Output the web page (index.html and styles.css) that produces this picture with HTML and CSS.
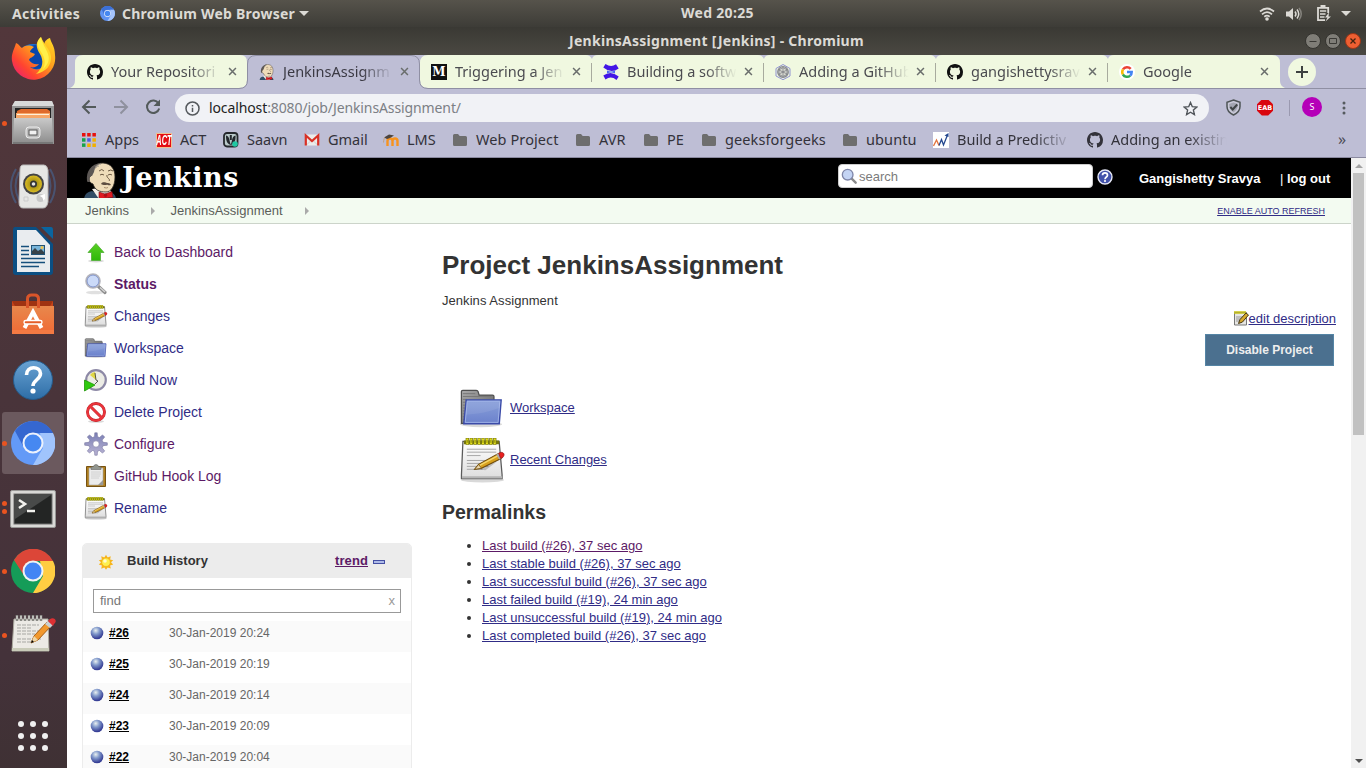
FILE: index.html
```html
<!DOCTYPE html>
<html lang="en">
<head>
<meta charset="utf-8">
<title>JenkinsAssignment [Jenkins]</title>
<link rel="stylesheet" href="styles.css">
</head>
<body>
<svg class="defs" width="0" height="0" aria-hidden="true">
  <defs>
    <linearGradient id="silver" x1="0" y1="0" x2="0" y2="1"><stop offset="0" stop-color="#c9c9c9"/><stop offset="1" stop-color="#8e8e8e"/></linearGradient>
    <linearGradient id="paper" x1="0" y1="0" x2="0" y2="1"><stop offset="0" stop-color="#fff"/><stop offset="1" stop-color="#ddd"/></linearGradient>
    <linearGradient id="blueFolder" x1="0" y1="0" x2="0" y2="1"><stop offset="0" stop-color="#8aa1da"/><stop offset="1" stop-color="#6b81cc"/></linearGradient>
    <linearGradient id="grayFolder" x1="0" y1="0" x2="1" y2="1"><stop offset="0" stop-color="#aaa"/><stop offset="1" stop-color="#5c5c5c"/></linearGradient>
    <linearGradient id="ffBody" x1="1" y1="0" x2="0" y2="1"><stop offset="0" stop-color="#ffe226"/><stop offset=".4" stop-color="#ff9a1e"/><stop offset=".7" stop-color="#ff4430"/><stop offset="1" stop-color="#e31587"/></linearGradient>
    <linearGradient id="bag" x1="0" y1="0" x2="0" y2="1"><stop offset="0" stop-color="#e8884c"/><stop offset="1" stop-color="#f06a35"/></linearGradient>
    <linearGradient id="helpBlue" x1="0" y1="0" x2="0" y2="1"><stop offset="0" stop-color="#6aa3d4"/><stop offset="1" stop-color="#2d6da6"/></linearGradient>
    <linearGradient id="green" x1="0" y1="0" x2="0" y2="1"><stop offset="0" stop-color="#59cf24"/><stop offset="1" stop-color="#2db808"/></linearGradient>
    <linearGradient id="gearFill" x1="0" y1="0" x2="0" y2="1"><stop offset="0" stop-color="#7a7fb5"/><stop offset="1" stop-color="#b9b3d3"/></linearGradient>
    <radialGradient id="ball" cx=".4" cy=".3" r=".65"><stop offset="0" stop-color="#e9f0f0"/><stop offset=".45" stop-color="#8199cb"/><stop offset="1" stop-color="#373f96"/></radialGradient>
    <radialGradient id="cone" cx=".5" cy=".5" r=".5"><stop offset="0" stop-color="#8c7a10"/><stop offset="1" stop-color="#d9bb22"/></radialGradient>
  </defs>

  <symbol id="github" viewBox="0 0 16 16"><path fill="currentColor" fill-rule="evenodd" d="M8 0C3.58 0 0 3.58 0 8c0 3.54 2.29 6.53 5.47 7.59.4.07.55-.17.55-.38 0-.19-.01-.82-.01-1.49-2.01.37-2.53-.49-2.69-.94-.09-.23-.48-.94-.82-1.13-.28-.15-.68-.52-.01-.53.63-.01 1.08.58 1.23.82.72 1.21 1.87.87 2.33.66.07-.52.28-.87.51-1.07-1.78-.2-3.64-.89-3.64-3.95 0-.87.31-1.59.82-2.15-.08-.2-.36-1.02.08-2.12 0 0 .67-.21 2.2.82.64-.18 1.32-.27 2-.27s1.36.09 2 .27c1.53-1.04 2.2-.82 2.2-.82.44 1.1.16 1.92.08 2.12.51.56.82 1.27.82 2.15 0 3.07-1.87 3.75-3.65 3.95.29.25.54.73.54 1.48 0 1.07-.01 1.93-.01 2.2 0 .21.15.46.55.38A8.01 8.01 0 0 0 16 8c0-4.42-3.58-8-8-8z"/></symbol>

  <symbol id="butler" viewBox="0 0 34 37">
    <path d="M0 37c1-5 3-7 8-8l9 5 8-4c5 1 7 4 7 7z" fill="#334e66"/>
    <path d="M8 27l7 10h8l4-8-5-4z" fill="#f4efe8"/>
    <path d="M7 14C7 5 12 1 19 1c8 .5 12 6 12 14 0 9-4 15-9 15-7 0-11-2-13-8-3-1-4-3-4-5 0-2 1-3 2-3z" fill="#efdcb9" stroke="#2a241f" stroke-width=".8"/>
    <path d="M3 19C2 9 7 2 17 1c-4 2-6 4-7 9l-2 4c-2 0-3 2-2 6-2 0-3 0-3-1z" fill="#5c5754"/>
    <path d="M11 5c2-2 4-3 6-3M10 8c1-2 3-4 5-4" fill="none" stroke="#8b8681" stroke-width=".8"/>
    <path d="M15 9q3-3 5 0M24 9q3-2 5 0M16 13q2-1.500 4 0M24 13q2-1.500 4 0M23 13c-1 3 4 4 2 6" fill="none" stroke="#5c4936" stroke-width=".9"/>
    <path d="M17 22c2-3 5-1 6-1s3 0 4 2c-3 .6-3-.3-4-.3s-3 1-6-.7z" fill="#5c4c40"/>
    <path d="M20 25.500q2.500 1 4 0" fill="none" stroke="#8b6a4e" stroke-width=".7"/>
    <path d="M15 30l6 2 7-2.500 1 6-7 .5-7 1z" fill="#e01b22" stroke="#701015" stroke-width=".6"/><circle cx="21.500" cy="33.300" r="1.700" fill="#a91118"/>
  </symbol>

  <symbol id="close" viewBox="0 0 10 10"><path d="M1.200 1.200l7.600 7.600M8.800 1.200L1.200 8.800" stroke="currentColor" stroke-width="1.700"/></symbol>

  <symbol id="bmfolder" viewBox="0 0 14 12"><path d="M0 1.500Q0 0 1.500 0H5l1.700 2H12.500Q14 2 14 3.500V10.500Q14 12 12.500 12h-11Q0 12 0 10.500z" fill="#6e6e6e"/></symbol>

  <symbol id="notepad" viewBox="0 0 48 48">
    <ellipse cx="24" cy="45" rx="22" ry="2.500" fill="#000" opacity=".15"/>
    <path d="M4 5.500h37l3 34v4H2.500v-4z" fill="url(#paper)" stroke="#5a5a5a" stroke-width="1.300"/>
    <path d="M3 41h41v2.500H3z" fill="#b5b5b5"/>
    <path d="M5 4.500h36v4H5z" fill="#75750c"/>
    <path d="M8.500 2v7M12.500 2v7M16.500 2v7M20.500 2v7M24.500 2v7M28.500 2v7M32.500 2v7M36.500 2v7" stroke="#78780e" stroke-width="3.400"/>
    <path d="M8.500 2.500v6M12.500 2.500v6M16.500 2.500v6M20.500 2.500v6M24.500 2.500v6M28.500 2.500v6M32.500 2.500v6M36.500 2.500v6" stroke="#e7e31c" stroke-width="2"/>
    <path d="M8.500 4v3M12.500 4v3M16.500 4v3M20.500 4v3M24.500 4v3M28.500 4v3M32.500 4v3M36.500 4v3" stroke="#78780e" stroke-width=".8"/>
    <path d="M8 13.500h30M8 16.500h30M8 20h14M8 25h30M8 28h26M8 31h22M8 34h16" stroke="#a5a5a5" stroke-width="1"/>
    <path d="M19 34l20-8-12 9z" opacity=".18"/>
    <path d="M16 34l4-5 20-11 3 5-20 10z" fill="#d8a11d" stroke="#6e4a09" stroke-width="1.100"/>
    <path d="M21 30l19-10" stroke="#f5d76b" stroke-width="1.400"/>
    <path d="M16 34l4-5 3 4z" fill="#e9d6ac" stroke="#6e4a09" stroke-width=".7"/>
    <path d="M38 19l4-2 3 5-4 2z" fill="#aaa"/><path d="M40.500 17.500c3-2 6 0 5.500 2s-1.500 3-3.500 3.500z" fill="#e8201f" stroke="#8b1414" stroke-width=".7"/>
  </symbol>

  <symbol id="folder" viewBox="0 0 48 48">
    <ellipse cx="23" cy="41" rx="22" ry="3" fill="#000" opacity=".15"/>
    <path d="M2.500 40V7q0-1.500 1.500-1.500h14q1.500 0 2 1.500l1 3.500h14q1.500 0 1.500 1.500v28z" fill="url(#grayFolder)" stroke="#505050" stroke-width="1.300"/>
    <path d="M4 9h13M4 12h30M4 15h4M4 18h3M4 21h3M4 24h3M4 27h3M4 30h2M4 33h2M4 36h2" stroke="#777" stroke-width="1"/>
    <path d="M7.500 15.500h36.500l-2 25H5z" fill="url(#blueFolder)" stroke="#3b4ba8" stroke-width="1.500"/>
    <path d="M8.600 17h34l-1.800 22H6.500z" fill="none" stroke="#a9bbec" stroke-width=".8"/>
    <path d="M7 31c15-1 24-3 35-7l1-6H9z" fill="#fff" opacity=".08"/>
  </symbol>
  <symbol id="gauge" viewBox="0 0 14 14"><circle cx="7" cy="7" r="6.300" fill="url(#ball)"/></symbol>
</svg>

<div class="desktop">
  <header class="panel">
    <span class="panel-activities">Activities</span>
    <svg class="panel-logo" viewBox="0 0 44 44"><circle cx="22" cy="22" r="22" fill="#5f93f3"/><path d="M4 9A22 22 0 0 1 41 11H22L12 24z" fill="#3c70d6"/><path d="M41 11A22 22 0 0 1 22 44L32 27 30 11z" fill="#a5c4fb"/><circle cx="22" cy="22" r="10" fill="#e8effc"/><circle cx="22" cy="22" r="8" fill="#4688f1"/></svg>
    <span class="panel-app">Chromium Web Browser</span>
    <i class="caret panel-caret"></i>
    <span class="panel-clock">Wed 20:25</span>
    <span class="panel-tray">
      <svg width="16" height="14" viewBox="0 0 16 14" fill="none" stroke="#dcdad5" stroke-width="1.700"><path d="M1 4.500Q8-1.500 15 4.500M3 7.300q5-4.500 10 0M5.300 9.700q2.700-2 5.400 0"/><circle cx="8" cy="12" r="1.800" fill="#dcdad5" stroke="none"/></svg>
      <svg width="17" height="14" viewBox="0 0 17 14" fill="none" stroke="#dcdad5" stroke-width="1.500"><path d="M0 4.500h3L7 1v12L3 9.500H0z" fill="#dcdad5" stroke="none"/><path d="M9 4.500q2 2.500 0 5M11 2.500q3.500 4.500 0 9"/><path d="M13 1q4.500 6 0 12" opacity=".4"/></svg>
      <svg width="14" height="17" viewBox="0 0 14 17" fill="none" stroke="#dcdad5" stroke-width="1.800"><path d="M11.200 8V2.800H1V15.200H8"/><path d="M3.500 1.300h5" stroke-width="2.600"/><path d="M3 6h6.200M3 9h5.500M3 12h4.500" stroke-width="1.500"/><path d="M12 7.500L8 12.500h2.500L8.500 16.500 14 11.500h-2.500z" fill="#dcdad5" stroke="none"/></svg>
      <i class="caret"></i>
    </span>
  </header>

  <div class="workspace">
    <nav class="dock">
      <div class="dock-item"><svg width="48" height="48" viewBox="0 0 48 48"><circle cx="24" cy="26" r="17" fill="#1470d8"/><circle cx="27" cy="22" r="12" fill="#0a46ab"/><path d="M7 8c3 1 4 4 6 5 4-3 7-3 12-1-2 2-4 3-4 5l5 2c-2 4-5 3-6 6 3 4 6 5 10 4-2 3-6 4-9 3 5 4 13 3 16-3 3-6 0-10-1-14-2-5-1-10 5-12 1 5 5 8 5 17a21.500 21.500 0 1 1-43 6C2 19 5 15 7 8z" fill="url(#ffBody)"/><path d="M32 2c-6 5-5 11-1 17 4 7 3 14-4 20 10-2 16-9 15-18-1-7-7-11-10-19z" fill="#ffd62b"/><path d="M32 2c-5 5-4 9 0 15 4 6 5 11 2 17 5-4 7-9 5-15-2-6-6-10-7-17z" fill="#fff04a"/></svg></div>
      <div class="dock-item has-dot"><svg width="48" height="48" viewBox="0 1 48 48"><path d="M6 3h37l2 5v38H3V8z" fill="#959595"/><path d="M6 3h37l2 5H3z" fill="#d9d9d9"/><path d="M6 10h36v10H6z" fill="#222"/><path d="M8 13l4-2h26l3 2v8H7z" fill="#df6a2c"/><path d="M7 15h34v6H7z" fill="#f6a769"/><path d="M8 16.500h32" stroke="#fff0dc"/><path d="M5 20h38l1 25H4z" fill="url(#silver)"/><path d="M4 44h40v2H4z" fill="#777"/><rect x="17" y="29" width="14" height="11" rx="3" fill="#bcbcbc" stroke="#ececec"/><rect x="20" y="32" width="8" height="5" fill="#f1f1f1" stroke="#555"/></svg></div>
      <div class="dock-item"><svg width="50" height="48" viewBox="0 1 50 48"><path d="M8 7Q-2 24 8 41M11 10Q4 24 11 38M42 7q10 17 0 34M39 10q7 14 0 28" fill="none" stroke="#466796" stroke-width="2" opacity=".6"/><path d="M15 3h21q3 0 4 5v32q-1 6-5 6H15q-4 0-4-6L12 8q0-5 3-5z" fill="#e6e6e4" stroke="#bababa"/><circle cx="25.500" cy="22" r="10.500" fill="#444"/><circle cx="25.500" cy="22" r="8.500" fill="url(#cone)"/><circle cx="25.500" cy="22" r="3.500" fill="#343434"/><circle cx="25.500" cy="22" r="1.800" fill="#e5e5e5"/><circle cx="32.500" cy="36" r="4" fill="#c7c7c7"/><path d="M31 34a4 4 0 0 1 4 5l2-2v-5z" fill="#fff"/><path d="M16 35h4v4h-4z" fill="none" stroke="#ccc"/></svg></div>
      <div class="dock-item"><svg width="48" height="48" viewBox="0 0 48 48"><path d="M6 0h21l17 17v28q0 3-3 3H7q-3 0-3-3V3q0-3 2-3z" fill="#0b4f83"/><path d="M32 0h10q2 0 2 3v9z" fill="#0a659f"/><path d="M8 3h19l14 15v27H8z" fill="#e9ecef"/><path d="M12 19.500h8M12 23.500h8M12 27.500h8M12 31.500h24M12 35.500h24M12 39.500h18" stroke="#164f7c" stroke-width="1.700"/><rect x="22.500" y="18.500" width="13" height="9" fill="#78b5da" stroke="#235375"/><path d="M23 27v-3l3-3 3 3 3-2 3 3v2z" fill="#38434a"/><circle cx="33" cy="20.500" r="1.500" fill="#f2c34c"/></svg></div>
      <div class="dock-item"><svg width="48" height="48" viewBox="0 -1 48 48"><path d="M3 9h41v8H3z" fill="#c64318"/><path d="M3 9h41l-3 5H6z" fill="#9f3312"/><path d="M3 14h42v28H3z" fill="url(#bag)"/><path d="M3 38h42v4H3z" fill="#f47a43"/><path d="M18.500 16V7q0-4 4-4h3q4 0 4 4v9" fill="none" stroke="#d9552a" stroke-width="3"/><path d="M15.500 36L24 20l8.500 16" fill="none" stroke="#fff" stroke-width="4"/><rect x="15" y="28.500" width="18" height="3.500" rx="1.700" fill="#e45d28" stroke="#fff" stroke-width="1.400"/></svg></div>
      <div class="dock-item"><svg width="44" height="44" viewBox="0 0 44 44"><circle cx="22" cy="23" r="19.500" fill="url(#helpBlue)" stroke="#245b8c"/><path d="M15.500 18c0-10 14-9 14-1.500 0 6-7.500 6.500-7.500 12.500" fill="none" stroke="#fff" stroke-width="3.600"/><circle cx="22" cy="34" r="2.600" fill="#fff"/></svg></div>
      <div class="dock-item has-dot is-active"><svg width="44" height="44" viewBox="0 0 44 44"><circle cx="22" cy="22" r="22" fill="#639af7"/><path d="M4 10A22 22 0 0 1 42 12H22L12 25z" fill="#3567d0"/><path d="M42 12A22 22 0 0 1 22 44L32 27 29 12z" fill="#a0c4fc"/><circle cx="22" cy="22" r="10.500" fill="#edf2fc"/><circle cx="22" cy="22" r="8.500" fill="#4688f1"/></svg></div>
      <div class="dock-item has-two-dots"><svg width="48" height="44" viewBox="0 0 48 44"><rect x="1.500" y="5.500" width="45" height="37" rx="1.500" fill="#d9d9d6" stroke="#979795"/><rect x="5" y="9" width="38" height="30" fill="#232524" stroke="#6e6e6c"/><path d="M6 10h36L6 34z" fill="#484a49"/><path d="M10 15l6 4-6 4M18 26h8" fill="none" stroke="#f2f2ee" stroke-width="2.600"/></svg></div>
      <div class="dock-item has-dot"><svg width="44" height="44" viewBox="1 0 44 44"><circle cx="23" cy="22" r="22" fill="#159c58"/><path d="M4 11A22 22 0 0 1 43 12H23L13 25z" fill="#dc4638"/><path d="M43 12A22 22 0 0 1 23 44L33 27 30 12z" fill="#ffcd42"/><circle cx="23" cy="22" r="10.500" fill="#f2f3f2"/><circle cx="23" cy="22" r="8.500" fill="#4285f4"/></svg></div>
      <div class="dock-item has-dot"><svg width="48" height="44" viewBox="0 0 48 44"><path d="M5 6h34l1 32H3z" fill="#eceae5" stroke="#aaa99e"/><path d="M3 35h37v3H3z" fill="#c9cbb9"/><path d="M8 2v6M12 2v6M16 2v6M20 2v6M24 2v6M28 2v6M32 2v6" stroke="#8b8b86" stroke-width="2.500"/><path d="M8 3v3M12 3v3M16 3v3M20 3v3M24 3v3M28 3v3M32 3v3" stroke="#f2f2ef"/><path d="M8 12h22M8 15h14M8 18h24M8 21h18M8 26h24M8 29h15" stroke="#a7a7a3" stroke-dasharray="4 1"/><path d="M22 30l3-7 13-14 4 4-13 14z" fill="#f1982d" stroke="#a76017"/><path d="M22 30l3-7 4 4z" fill="#efd6a5"/><path d="M22 30l1-3 2 2z"/><path d="M36 11l3-3 5 4-3 3z" fill="#c9d0d2"/><path d="M39 8c4-6 11-1 6 3l-1 2z" fill="#dd3033"/></svg></div>
      <div class="dock-item dock-apps"><svg width="32" height="32" viewBox="0 0 32 32" fill="#f0f0f0"><circle cx="4" cy="4" r="3"/><circle cx="16" cy="4" r="3"/><circle cx="28" cy="4" r="3"/><circle cx="4" cy="16" r="3"/><circle cx="16" cy="16" r="3"/><circle cx="28" cy="16" r="3"/><circle cx="4" cy="28" r="3"/><circle cx="16" cy="28" r="3"/><circle cx="28" cy="28" r="3"/></svg></div>
    </nav>

    <section class="window">
      <div class="titlebar">
        <span class="window-title">JenkinsAssignment [Jenkins] - Chromium</span>
        <span class="window-buttons">
          <svg width="16" height="16" viewBox="0 0 16 16"><circle cx="8" cy="8" r="7.500" fill="#7f7d77" stroke="#34332f"/><path d="M4.500 8.500h7" stroke="#3a3935"/></svg>
          <svg width="16" height="16" viewBox="0 0 16 16"><circle cx="8" cy="8" r="7.500" fill="#7f7d77" stroke="#34332f"/><path d="M4.500 5.500h7v5h-7z" fill="none" stroke="#3a3935"/></svg>
          <svg width="16" height="16" viewBox="0 0 16 16"><circle cx="8" cy="8" r="7.500" fill="#ee5f32" stroke="#9d3617"/><path d="M5.500 5.500l5 5M10.500 5.500l-5 5" stroke="#43230f" stroke-width="1.300"/></svg>
        </span>
      </div>

      <div class="tabstrip">
        <svg class="tab-shapes" width="1299" height="34" viewBox="0 0 1299 34">
          <path d="M3 33q5-2 5-8V8q0-8 8-8h157q7 0 7 7v18q0 8-8 8z" fill="#f0f8e0"/>
          <path d="M353 8q0-8 8-8h158q4 0 6 4 1-4 6-4h160q4 0 6 4 1-4 6-4h160q4 0 6 4 1-4 6-4h160q4 0 6 4 1-4 6-4h158q8 0 8 8v18q0 5 5 7H361q-8 0-8-8z" fill="#f0f8e0"/>
          <path d="M524.500 8v19M696.500 8v19M868.500 8v19M1040.500 8v19" stroke="#a8ab9e"/>
          <path d="M0 33.500h172q8.500 0 8.500-8.500V9q0-8.500 8.500-8.500h155q8.500 0 8.500 8.500v16q0 8.500 8.500 8.500h938" fill="none" stroke="#8f8fa3"/>
        </svg>
        <div class="tab"><svg class="fav"><use href="#github"/></svg><span class="tab-label">Your Repositori</span><svg class="tab-close"><use href="#close"/></svg></div>
        <div class="tab"><svg class="fav"><use href="#butler"/></svg><span class="tab-label">JenkinsAssignm</span><svg class="tab-close"><use href="#close"/></svg></div>
        <div class="tab"><span class="fav medium">M</span><span class="tab-label">Triggering a Jen</span><svg class="tab-close"><use href="#close"/></svg></div>
        <div class="tab"><svg class="fav" viewBox="0 0 16 16"><path d="M2.500 0Q8 4 13 .3L15.700 4.500Q8 10 .3 3.500z" fill="#4316e6"/><path d="M2.500 15.500Q8 11.500 13.500 16L15.700 12.500Q8 6 .3 11.500z" fill="#4316e6"/><path d="M4 6.500q4 2 8 0v3q-4-2-8 0z" fill="#4a65f6"/></svg><span class="tab-label">Building a softw</span><svg class="tab-close"><use href="#close"/></svg></div>
        <div class="tab"><svg class="fav" viewBox="0 0 16 16" fill="none"><path d="M8 .5l7 4v7.500l-7 3.700-7-3.700V4.500z" stroke="#8f92cf"/><circle cx="8" cy="8" r="5.300" fill="#d7d9d0" stroke="#85878e" stroke-width="1.200"/><path d="M8 3.500l4 2.300v4.500L8 12.500l-4-2.200V5.800zM4 6l8 4M12 6l-8 4M8 4v8" stroke="#74767d" stroke-width=".7"/></svg><span class="tab-label">Adding a GitHub</span><svg class="tab-close"><use href="#close"/></svg></div>
        <div class="tab"><svg class="fav"><use href="#github"/></svg><span class="tab-label">gangishettysrav</span><svg class="tab-close"><use href="#close"/></svg></div>
        <div class="tab"><svg class="fav" viewBox="0 0 16 16"><circle cx="8" cy="8" r="8" fill="#fff"/><g fill="none" stroke-width="2.500"><path d="M4 5.400A4.800 4.800 0 0 1 11.700 4.900" stroke="#ea4335"/><path d="M3.900 10.500A5 5 0 0 1 4 5.400" stroke="#fbbc05"/><path d="M11.200 11.600A4.800 4.800 0 0 1 3.900 10.500" stroke="#34a853"/><path d="M8 8h4.700q0 2.300-1.500 3.600" stroke="#4285f4"/></g></svg><span class="tab-label">Google</span><svg class="tab-close"><use href="#close"/></svg></div>
        <span class="new-tab"><svg width="12" height="12" viewBox="0 0 12 12"><path d="M6 0v12M0 6h12" stroke="#3d4140" stroke-width="2"/></svg></span>
      </div>

      <div class="toolbar">
        <svg class="nav-icon" width="16" height="16" viewBox="0 0 16 16" fill="none" stroke="#535a5a" stroke-width="2"><path d="M15 8H2M8.500 1.500L2 8l6.500 6.500"/></svg>
        <svg class="nav-icon" width="16" height="16" viewBox="0 0 16 16" fill="none" stroke="#8f919e" stroke-width="2"><path d="M1 8h13M7.500 1.500L14 8l-6.500 6.500"/></svg>
        <svg class="nav-icon" width="16" height="16" viewBox="0 0 16 16" fill="none" stroke="#535a5a" stroke-width="2"><path d="M13.500 4.500A6.200 6.200 0 1 0 14.200 9.500"/><path d="M15 .5v6.500H8.500z" fill="#535a5a" stroke="none"/></svg>
        <div class="omnibox">
          <svg width="15" height="15" viewBox="0 0 15 15" fill="none" stroke="#55595d" stroke-width="1.500"><circle cx="7.500" cy="7.500" r="6.500"/><path d="M7.500 6.700v4.300M7.500 4v1.600"/></svg>
          <span class="url"><b>localhost</b>:8080/job/JenkinsAssignment/</span>
          <svg class="star" width="15" height="15" viewBox="0 0 15 15" fill="none" stroke="#50555a" stroke-width="1.400"><path d="M7.500 1.500l1.800 4.200 4.500.4-3.400 3 1 4.500-3.900-2.400-3.900 2.400 1-4.500-3.400-3 4.500-.4z"/></svg>
        </div>
        <svg class="shield" width="15" height="17" viewBox="0 0 15 17"><path d="M7.500 1L14 3.200v4.300q0 5.500-6.500 8.500Q1 13 1 7.500V3.200z" fill="#c9c9d8" stroke="#4e5456" stroke-width="1.500"/><path d="M7.500 3.500L12 5Q12 10.500 7.500 13.500 3 10.500 3 5z" fill="#a4a6b2"/><path d="M4.300 8l2.400 2.500 4.500-5" stroke="#3f4446" stroke-width="2" fill="none"/></svg>
        <span class="adblock">EAB</span>
        <i class="toolbar-sep"></i>
        <span class="avatar">S</span>
        <svg class="kebab" width="4" height="14" viewBox="0 0 4 14" fill="#555a5e"><circle cx="2" cy="2" r="1.500"/><circle cx="2" cy="7" r="1.500"/><circle cx="2" cy="12" r="1.500"/></svg>
      </div>

      <div class="bookmarks">
        <div class="bm bm-apps"><svg width="14" height="14" viewBox="0 0 14 14"><path d="M0 0h3.500v3.500H0zM5.200 0h3.500v3.500H5.200zM10.400 0h3.500v3.500h-3.500z" fill="#e8110d"/><path d="M0 5.200h3.500v3.500H0z" fill="#16a34a"/><path d="M5.200 5.200h3.500v3.500H5.200z" fill="#4e5ee0"/><path d="M10.400 5.200h3.500v3.500h-3.500z" fill="#f1b000"/><path d="M0 10.400h3.500v3.500H0z" fill="#16a34a"/><path d="M5.200 10.400h3.500v3.500H5.200zM10.400 10.400h3.500v3.500h-3.500z" fill="#f1b000"/></svg><span>Apps</span></div>
        <div class="bm"><span class="act-logo"><b>ACT</b></span><span>ACT</span></div>
        <div class="bm"><svg width="16" height="16" viewBox="0 0 16 16"><rect x="1" y="1" width="13.500" height="13.500" rx="3" fill="#b9c9c9" stroke="#25282c" stroke-width="1.800"/><path d="M3 3.500c4 1 3 5 4.800 9C9.500 9 8.500 4.500 12.600 3.500c0 6-1 8.500-4.800 9.500-3.700-1-4.800-4-4.800-9.500z" fill="#23272c"/><path d="M7.800 3v5" stroke="#23272c" stroke-width="2"/><circle cx="12" cy="12" r="2.800" fill="#20c8a3"/></svg><span>Saavn</span></div>
        <div class="bm"><svg width="16" height="16" viewBox="0 0 16 16"><path d="M2 2.500h12v11H2z" fill="#ececea"/><path d="M2 13.500l5-5M14 13.500l-5-5" stroke="#ccc"/><path d="M1.800 13.500V3.500L8 9l6.200-5.500v10" fill="none" stroke="#d93025" stroke-width="2.200"/></svg><span>Gmail</span></div>
        <div class="bm"><svg width="16" height="16" viewBox="0 0 16 16"><path d="M4.500 14V9q0-2.500 2.500-2.500T9.500 9v5M9.500 14V9q0-2.500 2.500-2.500T14.500 9v5" fill="none" stroke="#f7931e" stroke-width="2.400"/><path d="M1 5.500l5-3 5 1-4 2.500-3 1z" fill="#4d453f"/><path d="M1.500 5.500q-1 3-1 5" fill="none" stroke="#c4a17d"/></svg><span>LMS</span></div>
        <div class="bm bm-dir"><svg width="14" height="12"><use href="#bmfolder"/></svg><span class="wide">Web Project</span></div>
        <div class="bm bm-dir"><svg width="14" height="12"><use href="#bmfolder"/></svg><span>AVR</span></div>
        <div class="bm bm-dir"><svg width="14" height="12"><use href="#bmfolder"/></svg><span>PE</span></div>
        <div class="bm bm-dir"><svg width="14" height="12"><use href="#bmfolder"/></svg><span class="wide">geeksforgeeks</span></div>
        <div class="bm bm-dir"><svg width="14" height="12"><use href="#bmfolder"/></svg><span class="wide">ubuntu</span></div>
        <div class="bm"><svg width="16" height="16" viewBox="0 0 16 16"><path d="M0 0h16v16H0z" fill="#fff"/><path d="M.5 14l3-6 2.500 5.500" fill="none" stroke="#e2733d" stroke-width="1.300"/><path d="M6 13.500l2.500-6 2 5.500 4-10" fill="none" stroke="#23478e" stroke-width="1.300"/><path d="M11.500 3.500L15.500 1v4z" fill="#23478e"/></svg><span class="bm-fade">Build a Predictiv</span></div>
        <div class="bm"><svg width="16" height="16"><use href="#github"/></svg><span class="bm-fade">Adding an existin</span></div>
        <span class="more">»</span>
      </div>

      <div class="viewport">
        <div class="page">
          <div class="jk-header">
            <svg class="jk-head" width="34" height="37"><use href="#butler"/></svg>
            <span class="jk-name">Jenkins</span>
            <div class="jk-search"><svg width="16" height="16" viewBox="0 0 24 24"><path d="M16 16l6 6" stroke="#8a8a8a" stroke-width="3.500" stroke-linecap="round"/><circle cx="10" cy="10" r="8" fill="#c4d4f4" stroke="#7f86a8" stroke-width="2"/></svg><span>search</span></div>
            <svg class="jk-help" width="16" height="16" viewBox="0 0 16 16"><circle cx="8" cy="8" r="7" fill="#4353ab" stroke="#e7e9f7" stroke-width="1.400"/><path d="M5.500 6.300c0-3.300 5-3.300 5 0C10.500 8 8 8 8 10.200" fill="none" stroke="#fff" stroke-width="1.700"/><circle cx="8" cy="12" r="1.100" fill="#fff"/></svg>
            <span class="jk-user">Gangishetty Sravya</span>
            <span class="jk-logout"><i>|</i> log out</span>
          </div>
          <div class="crumbs">
            <span>Jenkins</span><i></i><span>JenkinsAssignment</span><i></i>
            <a class="refresh">ENABLE AUTO REFRESH</a>
          </div>

          <div class="content">
            <aside class="side">
              <ul class="tasks">
                <li class="seen"><svg width="24" height="24" viewBox="0 0 24 24"><ellipse cx="12" cy="21" rx="8" ry="1.500" opacity=".15"/><path d="M12 3.500l8 9H16.500V20.500h-9v-8H4z" fill="url(#green)" stroke="#4fae35" stroke-width=".8"/></svg><a>Back to Dashboard</a></li>
                <li class="seen now"><svg width="24" height="24" viewBox="0 0 24 24"><ellipse cx="11" cy="20.500" rx="9" ry="1.800" opacity=".12"/><path d="M14.500 14.500l6.500 6" stroke="#8b8b8b" stroke-width="3.200" stroke-linecap="round"/><path d="M16 15.500l5 4.500" stroke="#d2d2d2" stroke-width="1.600"/><circle cx="9" cy="9" r="6.900" fill="#cbdaf8" stroke="#b4b4bc" stroke-width="1.800"/><circle cx="9" cy="9" r="5.900" fill="none" stroke="#7087c8" stroke-width=".7"/></svg><a>Status</a></li>
                <li><svg width="24" height="24"><use href="#notepad"/></svg><a>Changes</a></li>
                <li><svg width="24" height="24"><use href="#folder"/></svg><a>Workspace</a></li>
                <li><svg width="24" height="24" viewBox="0 0 24 24"><circle cx="12" cy="12" r="9.800" fill="#ecece5" stroke="#8d89a6" stroke-width="2.200"/><path d="M12 12L6 7q2-3 5-3z" fill="#e0d746"/><path d="M11 5l1 7 2 1-3 3" fill="none" stroke="#333" stroke-width=".8"/><path d="M.5 12l10.500 5L.5 23z" fill="#2fc90e" stroke="#209508" stroke-width=".8"/></svg><a>Build Now</a></li>
                <li><svg width="24" height="24" viewBox="0 0 24 24"><ellipse cx="12" cy="21.500" rx="8" ry="1.300" opacity=".15"/><circle cx="12" cy="12" r="8.500" fill="#fff" stroke="#b82026" stroke-width="2.800"/><path d="M6 6l12 12" stroke="#b82026" stroke-width="2.800"/><circle cx="12" cy="12" r="8.500" fill="none" stroke="#ea353c" stroke-width="2.200"/><path d="M6 6l12 12" stroke="#ea353c" stroke-width="2.200"/></svg><a>Delete Project</a></li>
                <li class="seen"><svg width="24" height="24" viewBox="0 0 24 24"><path fill="url(#gearFill)" stroke="#77759f" stroke-width=".6" stroke-linejoin="round" fill-rule="evenodd" d="M10.500 4.700L10.800.8h2.400l.3 3.900 2 .8 3-2.600 2.200 2.200-2.600 3 .9 2.200 4.300.5v2.400l-4.300.5-.9 2.200 2.600 3-2.200 2.200-3-2.600-2 .8-.3 3.900h-2.400l-.3-3.900-2-.8-3 2.600-2.200-2.200 2.600-3-.9-2.200-4.300-.5v-2.400l4.300-.5.9-2.200-2.600-3 2.200-2.200 3 2.600zM12 8.800a3.200 3.200 0 1 0 0 6.400 3.200 3.200 0 1 0 0-6.400z"/></svg><a>Configure</a></li>
                <li class="seen"><svg width="24" height="24" viewBox="0 0 24 24"><path d="M2.500 2.500h19v20h-19z" fill="#b07f1e" stroke="#765213"/><path d="M5 4h14v17H5z" fill="#ececec" stroke="#aaa" stroke-width=".6"/><path d="M7 8h10M7 10h10M7 12h9M7 14h8" stroke="#ccc" stroke-width=".8"/><path d="M19 16l-5 5h5z" fill="#999"/><path d="M7 5V3l2.500-.5Q10 .5 12 .5t2.500 2L17 3v2.500H7z" fill="#92968f" stroke="#666" stroke-width=".6"/></svg><a>GitHub Hook Log</a></li>
                <li><svg width="24" height="24"><use href="#notepad"/></svg><a>Rename</a></li>
              </ul>

              <div class="history">
                <div class="history-head">
                  <svg width="16" height="16" viewBox="0 0 16 16"><path d="M8 .8l1.600 2.700 3.200-1.300-.7 3.300 3.100.8L13 8.200l2.200 2.400-3.100.9.7 3.100-3.200-1L8 15.800l-1.600-2.300-3.200 1.200.7-3.200-3.100-.9L3 8.300.8 6.200 3.900 5.500 3.200 2.200l3.200 1.300z" fill="#f8b61b"/><circle cx="8" cy="8.200" r="4.300" fill="#fdf04f" stroke="#efa315" stroke-width=".6"/><circle cx="7" cy="7" r="1.800" fill="#fffbd0"/></svg>
                  <strong>Build History</strong><a>trend</a><i class="collapse"></i>
                </div>
                <div class="find"><span>find</span><em>x</em></div>
                <div class="build"><svg width="14" height="14"><use href="#gauge"/></svg><a>#26</a><span>30-Jan-2019 20:24</span></div>
                <div class="build"><svg width="14" height="14"><use href="#gauge"/></svg><a>#25</a><span>30-Jan-2019 20:19</span></div>
                <div class="build"><svg width="14" height="14"><use href="#gauge"/></svg><a>#24</a><span>30-Jan-2019 20:14</span></div>
                <div class="build"><svg width="14" height="14"><use href="#gauge"/></svg><a>#23</a><span>30-Jan-2019 20:09</span></div>
                <div class="build"><svg width="14" height="14"><use href="#gauge"/></svg><a>#22</a><span>30-Jan-2019 20:04</span></div>
              </div>
            </aside>

            <main class="main">
              <h1>Project JenkinsAssignment</h1>
              <p class="desc">Jenkins Assignment</p>
              <div class="edit"><svg width="16" height="16" viewBox="0 0 16 16"><path d="M1.500 2.500h12v12.500h-12z" fill="#e6e6e4" stroke="#777"/><path d="M3 7h7M3 9h6M3 11h4" stroke="#999"/><path d="M2 1v3M4 1v3M6 1v3M8 1v3M10 1v3M12 1v3" stroke="#c8c316" stroke-width="1.500"/><path d="M5.500 13.500l1.500-4L13 3l2.500 2L9.500 12z" fill="#d6a92e" stroke="#463712"/></svg><a>edit description</a></div>
              <button class="disable">Disable Project</button>
              <div class="big-link"><svg width="46" height="46"><use href="#folder"/></svg><a>Workspace</a></div>
              <div class="big-link changes"><svg width="46" height="46"><use href="#notepad"/></svg><a>Recent Changes</a></div>
              <h2>Permalinks</h2>
              <ul class="permalinks">
                <li><a class="visited">Last build (#26), 37 sec ago</a></li>
                <li><a>Last stable build (#26), 37 sec ago</a></li>
                <li><a>Last successful build (#26), 37 sec ago</a></li>
                <li><a>Last failed build (#19), 24 min ago</a></li>
                <li><a>Last unsuccessful build (#19), 24 min ago</a></li>
                <li><a>Last completed build (#26), 37 sec ago</a></li>
              </ul>
            </main>
          </div>
        </div>
        <div class="scrollbar"><i class="up"></i><i class="thumb"></i><i class="down"></i></div>
      </div>
    </section>
  </div>
</div>
</body>
</html>
```
FILE: styles.css
```css
* { box-sizing: border-box; }
body { margin: 0; overflow: hidden; font-family: "Liberation Sans", Arial, sans-serif; font-size: 13px; color: #333; }
svg { flex: none; display: block; }
.defs { position: absolute; }
.desktop { width: 1366px; height: 768px; display: flex; flex-direction: column; overflow: hidden; }

/* top panel */
.panel { height: 27px; flex: none; display: grid; grid-template-columns: 100px 22px 177px 382px 1fr auto; align-items: center; background: linear-gradient(#56534b, #3d3c37); color: #dcdad5; font: bold 14px/27px "Noto Sans", sans-serif; white-space: nowrap; }
.panel-activities { padding-left: 12px; letter-spacing: .3px; }
.panel-app { letter-spacing: .22px; }
.panel-clock { letter-spacing: .3px; line-height: 26px; padding-bottom: 1px; }
.panel-logo { width: 15px; height: 15px; }
.caret { display: block; width: 0; height: 0; border: 5px solid transparent; border-top-color: #dcdad5; border-bottom: 0; }
.panel-tray { display: flex; align-items: center; width: 107px; }
.panel-tray svg:nth-child(2) { margin-left: 11px; }
.panel-tray svg:nth-child(3) { margin-left: 14px; }
.panel-tray .caret { margin-left: 10px; }

.workspace { flex: 1; display: flex; min-height: 0; }
.dock { width: 67px; flex: none; display: flex; flex-direction: column; background: linear-gradient(#52373b, #49343a 50%, #44323a 85%, #3f3134); }
.dock-item { position: relative; height: 64px; flex: none; display: flex; align-items: center; justify-content: center; padding-right: 1px; }
.dock-item.is-active { background: #6b595e; width: 62px; height: 62px; margin: 1px 0 1px 2px; border-radius: 3px; padding-right: 0; }
.has-dot::before, .has-two-dots::before { content: ""; position: absolute; left: 2px; top: 30px; width: 5px; height: 5px; border-radius: 50%; background: #e95420; }
.is-active::before { left: 0; top: 29px; }
.has-two-dots::before { top: 26px; box-shadow: 0 8px #e95420; }
.dock-apps { margin-top: auto; }

.window { flex: 1; display: flex; flex-direction: column; min-width: 0; }
.titlebar { height: 28px; flex: none; position: relative; display: flex; align-items: center; justify-content: center; background: linear-gradient(#3a3934, #4a4842); color: #dcdad5; font: bold 14px/28px "Noto Sans", sans-serif; letter-spacing: .27px; }
.window-buttons { position: absolute; right: 5px; top: 6px; display: flex; gap: 4px; }

/* tabs */
.tabstrip { height: 34px; flex: none; position: relative; display: flex; background: #bebed5; padding-left: 8px; font: 14.500px/32px "Noto Sans", sans-serif; color: #4b4b50; }
.tab-shapes { position: absolute; left: 0; top: 0; }
.tab { position: relative; width: 172px; flex: none; display: flex; align-items: center; padding-left: 12px; }
.tab:nth-of-type(2) { color: #3b3a44; }
.fav { width: 16px; height: 16px; flex: none; color: #111; }
.medium { background: #111; color: #fff; font: bold 12px/16px "DejaVu Serif", serif; text-align: center; }
.tab-label { width: 112px; margin: 0 5px 2px 8px; white-space: nowrap; -webkit-mask-image: linear-gradient(90deg, #000 70%, transparent 98%); mask-image: linear-gradient(90deg, #000 70%, transparent 98%); }
.tab-close { width: 9px; height: 9px; color: #6a6e6c; margin-bottom: 1px; }
.new-tab { position: relative; width: 28px; height: 28px; margin: 3px 0 0 9px; border-radius: 50%; background: #f0f8e0; display: flex; align-items: center; justify-content: center; }

.toolbar { height: 37px; flex: none; display: flex; align-items: center; background: #bebed5; padding-left: 14px; }
.nav-icon { margin: -2px 16px 0 0; }
.nav-icon:nth-child(3) { margin-right: 14px; }
.omnibox { width: 1034px; height: 28px; margin-top: 1px; border-radius: 14px; background: #f1f2f6; display: flex; align-items: center; padding: 0 11px 0 10px; font: 14px/28px "Noto Sans", sans-serif; color: #7c7f85; }
.url { margin-left: 9px; flex: 1; letter-spacing: -.11px; }
.url b { font-weight: normal; color: #222; }
.shield { margin-left: 17px; }
.adblock { margin-left: 16px; width: 16px; height: 16px; background: #d9060d; color: #fff; font: bold 6.500px/16px "DejaVu Sans", sans-serif; text-align: center; clip-path: polygon(30% 0, 70% 0, 100% 30%, 100% 70%, 70% 100%, 30% 100%, 0 70%, 0 30%); }
.toolbar-sep { width: 1px; height: 16px; background: #9a99b0; margin-left: 16px; }
.avatar { margin: -1px 0 0 12px; width: 20px; height: 20px; border-radius: 50%; background: #b500b8; color: #fff; font: 9px/20px "Noto Sans", sans-serif; text-align: center; }
.kebab { margin-left: 20px; }

.bookmarks { height: 32px; flex: none; display: grid; grid-template-columns: 75px 67px 81px 79px 69px 123px 68px 58px 141px 91px 154px 251px auto; align-items: center; background: #bebed5; border-bottom: 1px solid #8a899f; padding: 0 0 4px 14px; font: 14.500px/27px "Noto Sans", sans-serif; color: #33323a; }
.bm { display: flex; align-items: center; gap: 8px; white-space: nowrap; }
.bm svg, .act-logo { margin-top: 1px; }
.bm-apps, .bm-dir { gap: 9px; padding-left: 1px; }
.bm .wide { letter-spacing: .1px; }
.bm-fade { width: 118px; -webkit-mask-image: linear-gradient(90deg, #000 65%, transparent 98%); mask-image: linear-gradient(90deg, #000 65%, transparent 98%); }
.act-logo { width: 16px; height: 15px; background: #e40c12; color: #fff; overflow: hidden; outline: 1px solid #f0c090; outline-offset: -1px; }
.act-logo b { display: block; font: italic bold 14px/15px "Liberation Sans", sans-serif; transform: scaleX(.53); transform-origin: 0 0; width: 30px; text-align: center; }
.more { color: #4d4d57; font-size: 16px; }

/* jenkins page */
.viewport { flex: 1; display: flex; min-height: 0; }
.page { flex: 1; display: flex; flex-direction: column; background: #fff; min-width: 0; overflow: hidden; }
.jk-header { height: 40px; flex: none; display: flex; align-items: center; background: #000; color: #fff; font-weight: bold; white-space: nowrap; }
.jk-head { margin: 4px 4px 0 17px; align-self: flex-start; }
.jk-name { width: 716px; font: bold 27px/39px "DejaVu Serif", serif; letter-spacing: .5px; height: 40px; }
.jk-search { width: 255px; height: 24px; margin-top: -4px; background: #fff; border-radius: 4px; display: flex; align-items: center; gap: 2px; padding-left: 2px; color: #7b7b7b; font-weight: normal; border: 1px solid #ccc; }
.jk-help { margin: -2px 26px 0 4px; }
.jk-user { width: 141px; }
.jk-logout i { font-style: normal; font-weight: normal; }
.crumbs { height: 26px; flex: none; display: flex; align-items: center; background: #f3fbf1; border-bottom: 1px solid #ccd4ca; padding: 0 26px 0 18px; color: #5b5e5a; }
.crumbs i { border: 4px solid transparent; border-left: 4px solid #aaa; border-right: 0; margin: 0 15.500px 0 22px; }
.crumbs .refresh { margin-left: auto; font-size: 9px; }
a { color: #302c86; text-decoration: underline; }
a.visited, .seen a { color: #5c1a66; }

.content { flex: 1; display: flex; min-height: 0; }
.side { width: 345px; margin-right: 30px; padding: 12px 0 0 15px; flex: none; }
.tasks { list-style: none; margin: 0; padding: 0 0 0 2px; font-size: 14px; }
.tasks li { height: 32px; display: flex; align-items: center; gap: 6px; }
.tasks a { text-decoration: none; }
.tasks .now { font-weight: bold; }
.history { margin-top: 19px; border: 1px solid #ececec; border-radius: 5px 5px 0 0; height: 260px; }
.history-head { height: 34px; background: #ececec; border-radius: 4px 4px 0 0; display: flex; align-items: center; padding: 0 0 2px 15px; }
.history-head svg { margin: 4px 13px 0 0; }
.history-head strong { width: 208px; }
.history-head a { color: #5c1a66; font-weight: bold; letter-spacing: .1px; }
.collapse { width: 12px; height: 4px; margin: 4px 0 0 5px; background: #aebbe8; border: 1px solid #444fa3; }
.find { height: 24px; margin: 11px 10px 8px; border: 1px solid #999; display: flex; align-items: center; justify-content: space-between; padding: 0 5px 2px 6px; color: #777; }
.find em { font-style: normal; color: #999; }
.build { height: 31px; display: flex; align-items: flex-start; padding: 4px 0 0 7px; font-size: 12px; line-height: 16px; color: #666; }
.build:nth-child(odd) { background: #fafafa; }
.build svg { margin: 1px 5px 0 0; }
.build a { color: #000; font-weight: bold; width: 60px; }

.main { flex: 1; display: flex; flex-direction: column; align-items: flex-start; padding-right: 15px; }
h1 { margin: 26px 0 0; font-size: 26px; line-height: 30px; }
.desc { margin: 12px 0 0; line-height: 18px; letter-spacing: .05px; }
.edit { align-self: flex-end; display: flex; align-items: center; height: 18px; margin-top: -1px; }
.disable { align-self: flex-end; margin: 7px 2px 0 0; width: 129px; height: 32px; border: 1px solid #5585a5; background: #4b708f; color: #eee; font: bold 12px "Liberation Sans", sans-serif; padding: 0; }
.big-link { height: 48px; margin: 17px 0 0 17px; display: flex; align-items: center; gap: 5px; }
.big-link svg { margin-top: 1px; }
.changes { margin-top: 4px; }
.changes svg { width: 47px; height: 47px; margin-right: -1px; }
h2 { margin: 17px 0 0; font-size: 19.500px; line-height: 24px; }
.permalinks { margin: 13px 0 0; padding-left: 40px; line-height: 18px; }

.scrollbar { width: 15px; flex: none; background: #f1f1f1; display: flex; flex-direction: column; align-items: center; }
.scrollbar .up { border: 4px solid transparent; border-bottom-color: #a3a3a3; border-top: 0; margin: 6px 0 5px; }
.scrollbar .thumb { width: 11px; height: 262px; background: #c1c1c1; }
.scrollbar .down { border: 4px solid transparent; border-top-color: #505050; border-bottom: 0; margin: auto 0 5px; }
```
